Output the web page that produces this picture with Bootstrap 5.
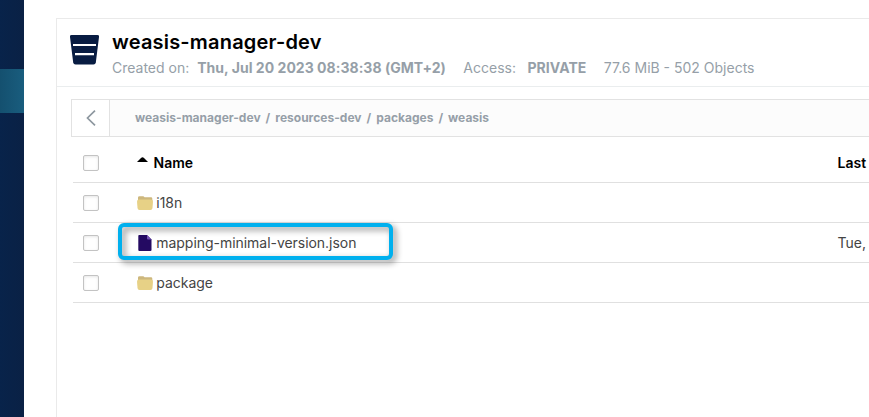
<!DOCTYPE html>
<html lang="en">
<head>
<meta charset="utf-8">
<meta name="viewport" content="width=device-width, initial-scale=1">
<title>weasis-manager-dev</title>
<link href="https://cdn.jsdelivr.net/npm/bootstrap@5.3.0/dist/css/bootstrap.min.css" rel="stylesheet">
<style>
  body { font-family: Inter, "Liberation Sans", sans-serif; font-size: 14px; line-height: 20px; color: #444; background: #fff; }
  .side-rail { width: 24px; background: linear-gradient(90deg, #08234a, #0a2145); }
  .side-active { height: 44px; margin-top: 69px; background: linear-gradient(90deg, #14506f, #195d7e); }
  .panel { margin: 18px 0 0 32px; border: 1px solid #eaeaea; border-width: 1px 0 0 1px; min-width: 0; }
  .bucket-head { height: 68px; border-bottom: 1px solid #eaedee; padding: 11px 0 0 13px; gap: 13px; }
  .bucket-icon { margin-top: 5px; }
  .bucket-title { font-size: 20px; line-height: 24px; font-weight: 600; letter-spacing: .19px; color: #000; margin: 0 0 4px; }
  .bucket-meta { color: #969fa8; gap: 17.500px; }
  .bucket-meta b { font-weight: 700; letter-spacing: .03px; }
  .meta-created { gap: 8px; }
  .meta-access { gap: 11.500px; }
  .crumb-bar { margin: 12px 0 0 14px; height: 38px; border: 1px solid #e2e2e2; border-right: 0; background: #fcfcfc; }
  .back-btn { width: 38px; border: 0; border-right: 1px solid #e2e2e2; background: #fff; padding: 0; }
  .crumbs { padding-left: 25px; gap: 5px; font-size: 12px; font-weight: 650; letter-spacing: .01px; color: #969fa8; }
  .object-list { margin-left: 16px; }
  .list-line { height: 40px; border-bottom: 1px solid #e0e0e0; }
  .list-line.heading { height: 46px; font-weight: 600; color: #000; padding-top: 6px; }
  .tick { width: 16px; height: 16px; margin: 0 0 0 10px; border: 1px solid #c3c3c3; border-radius: 2px; box-shadow: inset 0 1px 3px rgba(0,0,0,.1); appearance: none; background: #fff; }
  .name-cell { width: 738.500px; padding-left: 38px; gap: 3.300px; letter-spacing: -.04px; }
  .heading .name-cell { gap: 4.500px; letter-spacing: 0; }
  .highlight { left: 118px; top: 223px; width: 275px; height: 37px; border: 4px solid #00b0ee; border-radius: 6px; filter: drop-shadow(3px 3px 3px rgba(0,0,0,.45)); }
</style>
<script src="https://cdn.jsdelivr.net/npm/bootstrap@5.3.0/dist/js/bootstrap.bundle.min.js"></script>
</head>
<body class="overflow-hidden">
<div class="d-flex vh-100 position-relative">
  <aside class="side-rail flex-shrink-0"><div class="side-active"></div></aside>
  <main class="panel flex-grow-1 overflow-hidden text-nowrap">
    <header class="bucket-head d-flex">
      <svg class="bucket-icon flex-shrink-0" width="29" height="30" viewBox="0 0 29 30">
        <path fill="#081c42" d="M1.500 0h26Q29.200 0 29 1.700L25.800 27.600Q25.500 29.500 23.500 29.500h-18Q3.500 29.500 3.200 27.600L0 1.700Q-.2 0 1.500 0z"/>
        <path fill="#fff" d="M3 9h23v2H3zM5 18h19v2.300H5z"/>
      </svg>
      <div>
        <h1 class="bucket-title">weasis-manager-dev</h1>
        <div class="bucket-meta d-flex">
          <div class="meta-created d-flex"><span>Created on:</span><b>Thu, Jul 20 2023 08:38:38 (GMT+2)</b></div>
          <div class="meta-access d-flex"><span>Access:</span><b>PRIVATE</b></div>
          <span>77.6 MiB - 502 Objects</span>
        </div>
      </div>
    </header>
    <nav class="crumb-bar d-flex align-items-stretch" aria-label="Path">
      <button class="back-btn d-flex align-items-center justify-content-center" aria-label="Back">
        <svg width="10" height="16" viewBox="0 0 10 16" fill="none" stroke="#8d979f" stroke-width="1.700"><path d="M9 .7 1.500 8 9 15.300"/></svg>
      </button>
      <div class="crumbs d-flex align-items-center"><span>weasis-manager-dev</span><span>/</span><span>resources-dev</span><span>/</span><span>packages</span><span>/</span><span>weasis</span></div>
    </nav>
    <section class="object-list">
      <div class="list-line heading d-flex align-items-center"><input class="tick flex-shrink-0" type="checkbox" aria-label="Select all"><div class="name-cell flex-shrink-0 d-flex"><svg class="mt-1" width="12" height="6" viewBox="0 0 12 6"><path d="M0 5 4 1Q5.500-.5 7 1l4 4z"/></svg><span>Name</span></div><span>Last</span></div>
      <div class="list-line d-flex align-items-center"><input class="tick flex-shrink-0" type="checkbox" aria-label="Select"><div class="name-cell flex-shrink-0 d-flex align-items-center"><svg width="16" height="14" viewBox="0 0 16 14"><path fill="#cdb77d" d="M1 3V1.500Q1 .3 2.500.3h3.500q1 0 1.500 1H14q1.300 0 1.300 1.200V5H1z"/><path fill="#e7d186" d="M2 3.500h12q2 0 2 2l-.5 6.500q-.2 2-2 2h-11q-1.800 0-2-2L0 5.500q0-2 2-2z"/></svg><span>i18n</span></div></div>
      <div class="list-line d-flex align-items-center"><input class="tick flex-shrink-0" type="checkbox" aria-label="Select"><div class="name-cell flex-shrink-0 d-flex align-items-center"><svg width="16" height="16" viewBox="0 0 16 16"><path fill="#240a62" d="M2 0h8l4.500 4.500V15q0 1-1 1H2.300q-1 0-1-1V1Q1.300 0 2 0z"/><path fill="#7652b5" d="M10 0l4.500 4.500H11q-1 0-1-1z"/></svg><span>mapping-minimal-version.json</span></div><span>Tue,</span></div>
      <div class="list-line d-flex align-items-center"><input class="tick flex-shrink-0" type="checkbox" aria-label="Select"><div class="name-cell flex-shrink-0 d-flex align-items-center"><svg width="16" height="14" viewBox="0 0 16 14"><path fill="#cdb77d" d="M1 3V1.500Q1 .3 2.500.3h3.500q1 0 1.500 1H14q1.300 0 1.300 1.200V5H1z"/><path fill="#e7d186" d="M2 3.500h12q2 0 2 2l-.5 6.500q-.2 2-2 2h-11q-1.800 0-2-2L0 5.500q0-2 2-2z"/></svg><span>package</span></div></div>
    </section>
  </main>
  <div class="highlight position-absolute"></div>
</div>
</body>
</html>
